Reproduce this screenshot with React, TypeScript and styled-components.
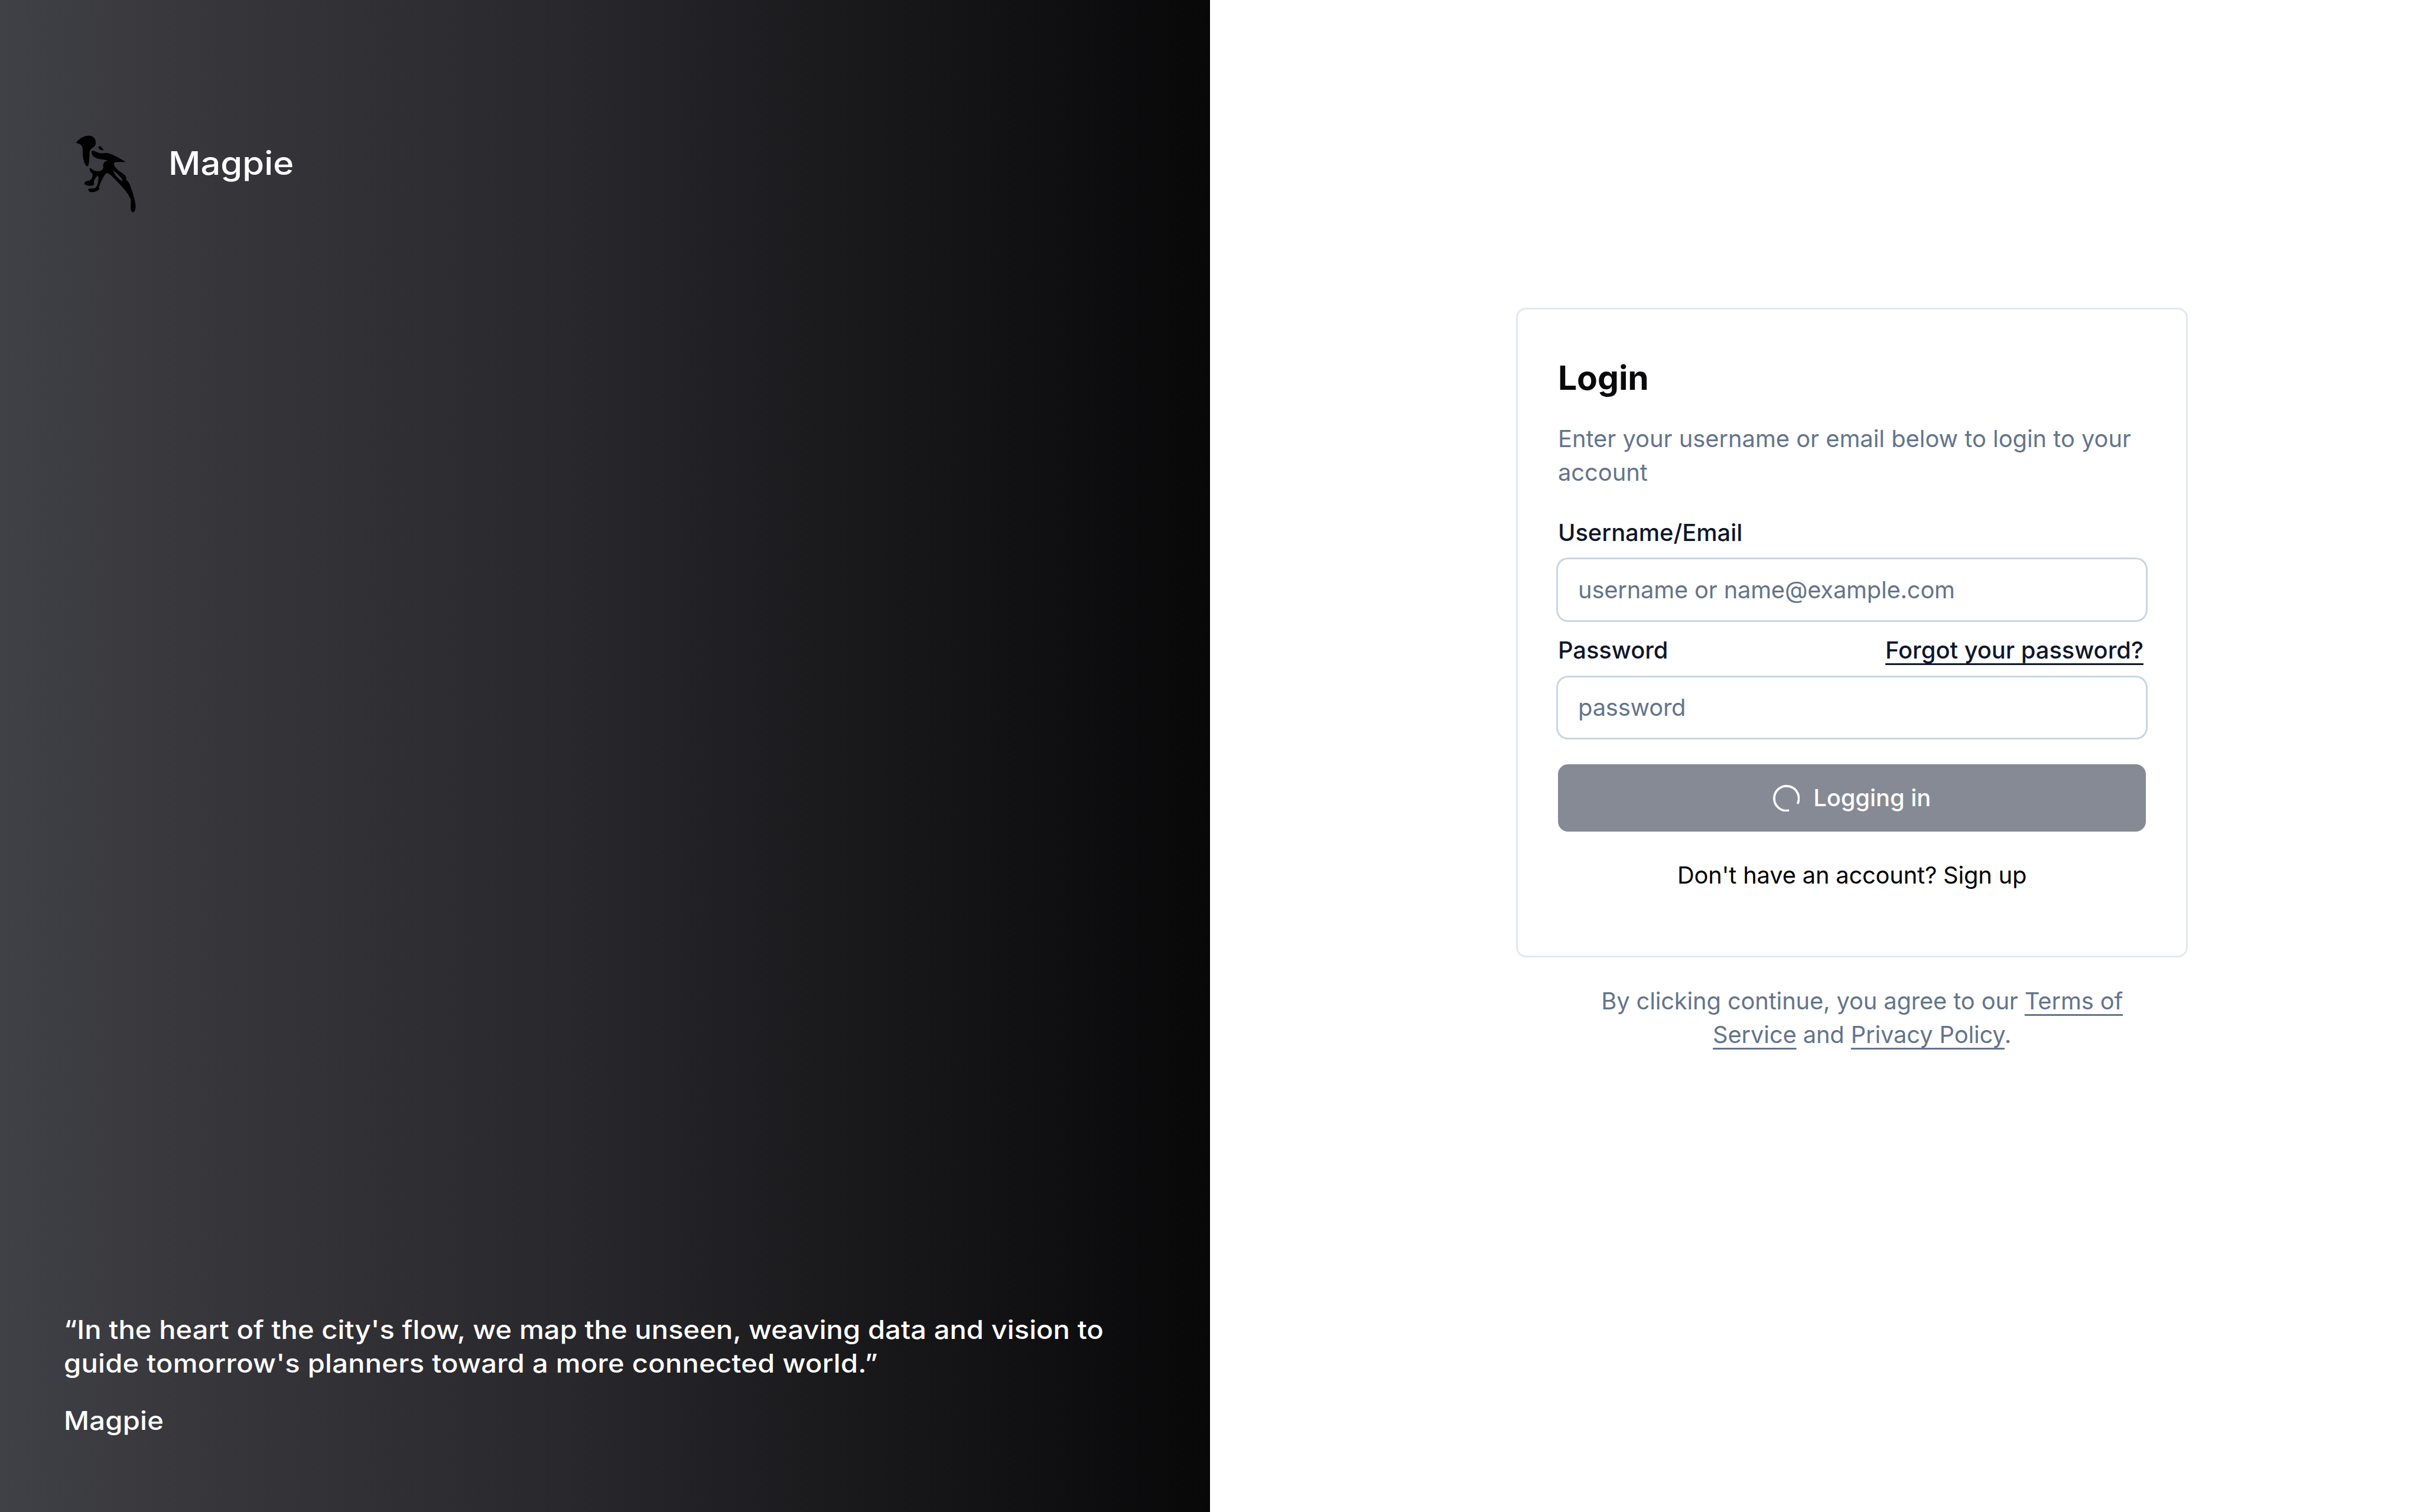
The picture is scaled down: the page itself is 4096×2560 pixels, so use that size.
import React from "react";
import styled, { createGlobalStyle } from "styled-components";

// 1rem is 16 layout units on a 1440-unit wide canvas.
const u = (n: number) => `${n / 16}rem`;

const GlobalStyle = createGlobalStyle`
  *, *::before, *::after { box-sizing: border-box; }
  html { font-size: calc(100vw / 90); }
  body {
    margin: 0;
    background: #fff;
    font-family: Inter, "Liberation Sans", sans-serif;
    -webkit-font-smoothing: antialiased;
  }
  h1, p { margin: 0; }
`;

const Page = styled.main`
  display: grid;
  grid-template-columns: 1fr 1fr;
  height: 100vh;
  overflow: hidden;
`;

const BrandPanel = styled.section`
  display: flex;
  flex-direction: column;
  justify-content: space-between;
  padding: ${u(73.33)} ${u(38)} ${u(44.5)};
  color: #fff;
  background: linear-gradient(to right, #3f4146 0%, #38373c 15%, #28272b 48%, #1b1b1e 67%, #080809 100%);
`;

const Brand = styled.div`
  display: flex;
  align-items: flex-start;
  margin-left: ${u(-1.33)};
`;

const Logo = styled.svg`
  width: ${u(50)};
  height: ${u(56.667)};
`;

const BrandName = styled.span`
  margin: ${u(10)} 0 0 ${u(13.6)};
  font-size: ${u(19.25)};
  line-height: ${u(28)};
  font-weight: 500;
  transform: scaleX(1.09);
  transform-origin: left;
`;

const Quote = styled.blockquote`
  display: flex;
  flex-direction: column;
  gap: ${u(14)};
  margin: 0;
  font-size: ${u(15.2)};
  line-height: ${u(20)};
  font-weight: 500;
  transform: scaleX(1.09);
  transform-origin: left;
`;

const QuoteLine = styled.span<{ $tracking: number }>`
  display: block;
  white-space: nowrap;
  letter-spacing: ${(p) => u(p.$tracking)};
`;

const FormPanel = styled.section`
  display: flex;
  flex-direction: column;
  padding: ${u(183)} 0 0 ${u(182)};
`;

const Card = styled.div`
  width: ${u(400)};
  height: ${u(387)};
  padding: ${u(26.85)} ${u(24)} 0;
  border: ${u(1.06)} solid #e2e8f0;
  border-radius: ${u(6)};
`;

const Title = styled.h1`
  font-size: ${u(20)};
  line-height: ${u(28)};
  font-weight: 700;
  color: #09090b;
`;

const Description = styled.p`
  margin-top: ${u(12.4)};
  font-size: ${u(14)};
  line-height: ${u(20)};
  color: #64748b;
`;

const FieldHead = styled.div<{ $gap: number }>`
  display: flex;
  justify-content: space-between;
  margin-top: ${(p) => u(p.$gap)};
  padding-right: ${u(1.5)};
  font-size: ${u(14)};
  line-height: ${u(20)};
  font-weight: 500;
  color: #0f172a;
`;

const Link = styled.a`
  color: inherit;
  text-decoration: underline;
  text-decoration-thickness: ${u(1)};
  text-underline-offset: ${u(2.8)};
  text-decoration-skip-ink: none;
`;

const Input = styled.input`
  display: block;
  width: 100%;
  height: ${u(36)};
  margin-top: ${u(5.8)};
  padding: 0 ${u(12)};
  border: 0;
  border-radius: ${u(6)};
  outline: 0;
  box-shadow: 0 0 0 ${u(1.06)} #cbd5e1;
  background: transparent;
  font: inherit;
  font-size: ${u(14)};
  letter-spacing: ${u(-0.06)};
  &::placeholder { color: #64748b; opacity: 1; }
`;

const SubmitButton = styled.button`
  display: flex;
  align-items: center;
  justify-content: center;
  gap: ${u(8)};
  width: 100%;
  height: ${u(40)};
  margin-top: ${u(16)};
  padding: 0;
  border: 0;
  border-radius: ${u(6)};
  background: #868a94;
  color: #fff;
  font: inherit;
  font-size: ${u(14)};
  line-height: ${u(20)};
  font-weight: 500;
`;

const Spinner = styled.svg`
  width: ${u(16)};
  height: ${u(16)};
`;

const SignUp = styled.p`
  margin-top: ${u(16)};
  font-size: ${u(14)};
  line-height: ${u(20)};
  letter-spacing: ${u(-0.06)};
  text-align: center;
  color: #000;
`;

const Legal = styled.p`
  width: ${u(350)};
  margin: ${u(16.2)} 0 0 ${u(31)};
  font-size: ${u(14)};
  line-height: ${u(20)};
  letter-spacing: ${u(-0.04)};
  text-align: center;
  color: #64748b;
`;

const MagpieLogo = () => (
  <Logo viewBox="0 0 450 510" fill="#000" aria-hidden="true">
    <path d="M78 103C90 86 118 66 147 66C172 66 184 83 184 103C184 120 175 125 165 131C153 139 151 150 150 168C149 190 148 230 139 230C128 230 119 205 115 175C113 150 117 124 104 115C97 109 83 107 78 103Z" />
    <path d="M198 128C199 121 208 122 214 127C220 132 226 139 224 144C216 145 199 138 198 128Z" />
    <path d="M163 147C175 144 186 155 205 159C220 162 229 157 246 159C275 163 310 187 345 206C320 208 285 204 281 212C281 230 296 245 312 257C328 268 347 278 347 291L346 304C355 306 362 317 368 333C383 370 394 410 397 440C399 458 393 476 383 476C374 475 371 462 371 446C371 425 374 412 367 398C354 370 331 347 306 319C284 296 262 271 243 265C231 272 213 309 206 328C203 336 198 346 204 352C193 363 172 370 156 368C146 366 142 356 145 350C160 347 177 352 187 340C195 328 200 300 198 283C190 277 182 294 176 304C169 315 180 322 172 331C160 336 130 336 123 323C123 312 134 307 147 307C162 303 168 285 167 273C163 263 150 258 151 241C157 236 164 249 176 253C193 258 214 258 222 243C227 233 220 225 226 214C231 204 240 201 249 198C220 192 194 194 174 179C163 170 158 153 163 147ZM276 252C283 272 300 292 325 310C333 304 314 283 299 270C290 261 282 255 276 252Z" fillRule="evenodd" />
  </Logo>
);

export default function App() {
  return (
    <>
      <GlobalStyle />
      <Page>
        <BrandPanel>
          <Brand>
            <MagpieLogo />
            <BrandName>Magpie</BrandName>
          </Brand>
          <Quote>
            <div>
              <QuoteLine $tracking={0.02}>“In the heart of the city's flow, we map the unseen, weaving data and vision to</QuoteLine>
              <QuoteLine $tracking={0.08}>guide tomorrow's planners toward a more connected world.”</QuoteLine>
            </div>
            <QuoteLine $tracking={0.08}>Magpie</QuoteLine>
          </Quote>
        </BrandPanel>
        <FormPanel>
          <Card>
            <Title>Login</Title>
            <Description>Enter your username or email below to login to your account</Description>
            <FieldHead $gap={16}>
              <span>Username/Email</span>
            </FieldHead>
            <Input placeholder="username or name@example.com" />
            <FieldHead $gap={8.2}>
              <span>Password</span>
              <Link>Forgot your password?</Link>
            </FieldHead>
            <Input placeholder="password" />
            <SubmitButton>
              <Spinner viewBox="0 0 24 24" fill="none" stroke="currentColor" strokeWidth="2">
                <path d="M21.88 16.83A11 11 0 1 0 14.29 22.76" />
              </Spinner>
              Logging in
            </SubmitButton>
            <SignUp>Don't have an account? Sign up</SignUp>
          </Card>
          <Legal>
            By clicking continue, you agree to our <Link>Terms of Service</Link> and <Link>Privacy Policy</Link>.
          </Legal>
        </FormPanel>
      </Page>
    </>
  );
}
